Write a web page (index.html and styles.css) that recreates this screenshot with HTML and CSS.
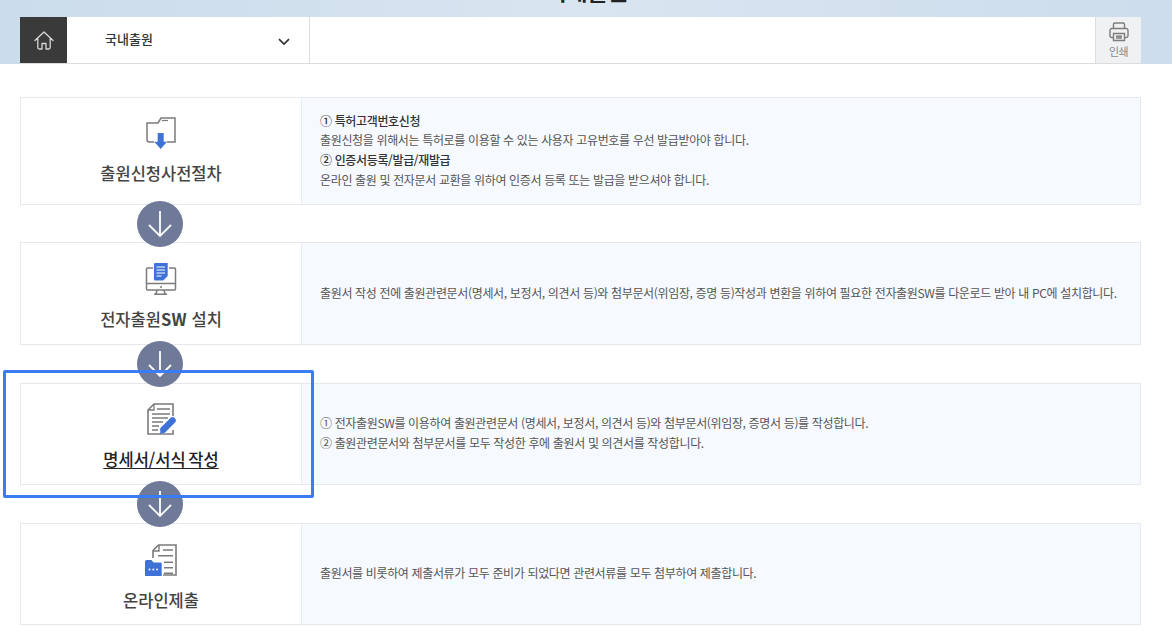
FILE: index.html
```html
<!DOCTYPE html>
<html lang="ko">
<head>
<meta charset="utf-8">
<title>국내출원</title>
<link rel="stylesheet" href="styles.css">
</head>
<body>
<header class="hero">
  <div class="page-title"><span>국내출원</span></div>
  <nav class="bar">
    <a class="home" href="#" aria-label="홈">
      <svg class="home-icon" viewBox="0 0 20 19" width="20" height="19"><path d="M1 9.500 10 1l9 8.500M3.800 7.500V16.500Q3.800 18 5.300 18h2.700v-5.500h4V18h2.700q1.500 0 1.500-1.500V7.500" fill="none" stroke="#d8d8d8" stroke-width="1.300" stroke-linejoin="round" stroke-linecap="round"/></svg>
    </a>
    <div class="select">
      <span class="select-label">국내출원</span>
      <svg viewBox="0 0 12 8" width="12" height="8"><path d="M1 1.200 6 6l5-4.800" fill="none" stroke="#333" stroke-width="1.700"/></svg>
    </div>
    <div class="spacer"></div>
    <button class="print" type="button">
      <svg viewBox="0 0 20 20" width="20" height="20"><path d="M4.500 6.500V2.200C4.500 1.500 5 1 5.700 1h8.600c.7 0 1.200.5 1.200 1.200v4.300M4 15.500H2.700C1.700 15.500 1 14.800 1 13.800V8.300C1 7.300 1.700 6.500 2.700 6.500h14.600C18.300 6.500 19 7.300 19 8.300v5.500c0 1-.7 1.700-1.700 1.700H16M4.500 11.500h11v7h-11zM7 14.200h6M7 16h6" fill="none" stroke="#7d7d7d" stroke-width="1.400"/></svg>
      <span>인쇄</span>
    </button>
  </nav>
</header>

<main class="steps">
  <section class="step step-1">
    <div class="step-head">
      <svg class="step-icon" viewBox="0 0 32 32"><path d="M9 25H4.500Q2 25 2 22.500V6h11l3-5h14v24h-8" fill="none" stroke="#7b7b7b" stroke-width="1.500"/><path d="M17 3.500h6" fill="none" stroke="#7b7b7b" stroke-width="1.200"/><path d="M12.700 16h6v8.800H22L15.700 32 9.300 24.800h3.400z" fill="#3f72d6"/></svg>
      <h2>출원신청사전절차</h2>
    </div>
    <div class="step-body">
      <p class="strong">① 특허고객번호신청</p>
      <p>출원신청을 위해서는 특허로를 이용할 수 있는 사용자 고유번호를 우선 발급받아야 합니다.</p>
      <p class="strong">② 인증서등록/발급/재발급</p>
      <p>온라인 출원 및 전자문서 교환을 위하여 인증서 등록 또는 발급을 받으셔야 합니다.</p>
    </div>
    <span class="next"><svg viewBox="0 0 46 46" width="46" height="46"><path d="M23 10v25M12 24l11 11 11-11" fill="none" stroke="#fff" stroke-width="1.800"/></svg></span>
  </section>

  <section class="step step-2">
    <div class="step-head">
      <svg class="step-icon" viewBox="0 0 32 32"><path d="M8 5H2.500Q1.500 5 1.500 6v20q0 1 1 1h27q1 0 1-1V6q0-1-1-1H24M1.500 20.500h29M12 27l-1 4M19 27l1 4M9 31.250h13" fill="none" stroke="#7b7b7b" stroke-width="1.500"/><circle cx="16" cy="24" r="1" fill="#7b7b7b"/><path d="M9 1q0-1 1-1h12.700v13l-4.500 4.500H10q-1 0-1-1z" fill="#3f72d6"/><path d="M11.500 4h8.500M11.500 7h8.500M11.500 10h8.500M11.500 13h5" stroke="#fff" stroke-width="1.200"/></svg>
      <h2>전자출원<b>SW</b> 설치</h2>
    </div>
    <div class="step-body">
      <p>출원서 작성 전에 출원관련문서(명세서, 보정서, 의견서 등)와 첨부문서(위임장, 증명 등)작성과 변환을 위하여 필요한 전자출원SW를 다운로드 받아 내 PC에 설치합니다.</p>
    </div>
    <span class="next"><svg viewBox="0 0 46 46" width="46" height="46"><path d="M23 10v25M12 24l11 11 11-11" fill="none" stroke="#fff" stroke-width="1.800"/></svg></span>
  </section>

  <section class="step step-3">
    <div class="step-head">
      <svg class="step-icon" viewBox="0 0 32 32"><path d="M28 13V1H9L3 7v24h25v-4" fill="none" stroke="#7b7b7b" stroke-width="1.600"/><path d="M3 7h6V1" fill="none" stroke="#7b7b7b" stroke-width="1.300"/><path d="M12 6h13M7 11h18M7 15h16M7 19h11M7 23h7M7 27h6" stroke="#7b7b7b" stroke-width="1.500"/><path d="M18 27 27.500 17.500" stroke="#fff" stroke-width="9"/><path d="M18.500 26.500 27.500 17.500" stroke="#3f72d6" stroke-width="6.500" stroke-linecap="round"/><path d="M15 31l1-6 5 4z" fill="#3f72d6"/></svg>
      <h2 class="linked">명세서/서식 작성</h2>
    </div>
    <div class="step-body">
      <p>① 전자출원SW를 이용하여 출원관련문서 (명세서, 보정서, 의견서 등)와 첨부문서(위임장, 증명서 등)를 작성합니다.</p>
      <p>② 출원관련문서와 첨부문서를 모두 작성한 후에 출원서 및 의견서를 작성합니다.</p>
    </div>
    <span class="next"><svg viewBox="0 0 46 46" width="46" height="46"><path d="M23 10v25M12 24l11 11 11-11" fill="none" stroke="#fff" stroke-width="1.800"/></svg></span>
    <span class="highlight"></span>
  </section>

  <section class="step step-4">
    <div class="step-head">
      <svg class="step-icon" viewBox="0 0 32 32"><path d="M8 14V6.500L13.500 1H31v30H18" fill="none" stroke="#7b7b7b" stroke-width="1.600"/><path d="M8 7h6V1M18 6h10M13 11.700h15M19 18.300h9M19 23.700h9M19 29.300h9" fill="none" stroke="#7b7b7b" stroke-width="1.400"/><path d="M0 17.500Q0 16 1.500 16h5l2 2.500h7q1.200 0 1.200 1.200V32H0z" fill="#3f72d6"/><g fill="#fff"><circle cx="4.500" cy="25.500" r=".9"/><circle cx="8.300" cy="25.500" r=".9"/><circle cx="12" cy="25.500" r=".9"/></g></svg>
      <h2>온라인제출</h2>
    </div>
    <div class="step-body">
      <p>출원서를 비롯하여 제출서류가 모두 준비가 되었다면 관련서류를 모두 첨부하여 제출합니다.</p>
    </div>
  </section>
</main>
</body>
</html>
```
FILE: styles.css
```css
* { box-sizing: border-box; }
html, body { margin: 0; padding: 0; }
body {
  height: 642px;
  overflow: hidden;
  background: #fff;
  color: #555;
  font-family: "Noto Sans CJK KR", "Noto Sans", sans-serif;
}
.hero {
  height: 64px;
  padding: 0 31px 0 20px;
  background: linear-gradient(90deg, #cbdcec 0%, #d9e5f0 50%, #cddded 100%);
}
.page-title {
  height: 17px;
  padding-bottom: 12px;
  padding-left: 14px;
  display: flex;
  justify-content: center;
  align-items: flex-end;
  overflow: hidden;
  font-size: 22px;
  line-height: 30px;
  font-weight: 700;
  color: #222;
}
.bar {
  display: flex;
  height: 47px;
  background: #fff;
  border-bottom: 1px solid #dcdcdc;
}
.home {
  width: 47px;
  display: flex;
  align-items: center;
  justify-content: center;
  background: #3a3a3a;
}
.select {
  width: 243px;
  padding: 0 19px 0 38px;
  display: flex;
  align-items: center;
  justify-content: space-between;
  border-right: 1px solid #dcdcdc;
  font-size: 13px;
  font-weight: 500;
  color: #333;
}
.select-label { margin-bottom: 4px; }
.select svg { margin-top: 3px; }
.spacer { flex: 1; }
.print {
  width: 46px;
  padding: 5px 0 0;
  display: flex;
  flex-direction: column;
  align-items: center;
  gap: 2px;
  background: #f0f1f2;
  border: 0;
  border-left: 1px solid #dedede;
  font-family: inherit;
  font-size: 11px;
  line-height: 14px;
  color: #888;
  letter-spacing: -.5px;
}
.steps {
  padding: 33px 31px 0 20px;
  display: flex;
  flex-direction: column;
}
.step {
  position: relative;
  display: flex;
  border: 1px solid #e6e8ee;
}
.step-1 { height: 108px; margin-bottom: 37px; }
.step-2 { height: 103px; margin-bottom: 38px; }
.step-3 { height: 102px; margin-bottom: 38px; }
.step-4 { height: 102px; }
.step-head {
  width: 280px;
  flex: none;
  padding-top: 19px;
  display: flex;
  flex-direction: column;
  align-items: center;
  background: #fff;
}
.step-2 .step-head, .step-4 .step-head { padding-top: 20px; }
.step-icon { width: 32px; height: 32px; display: block; }
.step-head h2 {
  margin: 11px 0 0;
  font-size: 16.500px;
  line-height: 26px;
  font-weight: 500;
  color: #444;
}
.step-head h2 b { font-weight: 700; letter-spacing: .3px; }
.step-head h2.linked {
  color: #222;
  word-spacing: -2px;
  text-decoration: underline;
  text-underline-offset: 2px;
}
.step-body {
  flex: 1;
  padding: 0 18px 2px;
  display: flex;
  flex-direction: column;
  justify-content: center;
  border-left: 1px solid #e9edf3;
  background: #f6f9fd;
  font-size: 12px;
  letter-spacing: -.35px;
  line-height: 19.700px;
}
.step-body p { margin: 0; white-space: nowrap; }
.step-body .strong { color: #333; font-weight: 500; }
.next {
  position: absolute;
  left: 116px;
  bottom: -43px;
  z-index: 1;
  width: 46px;
  height: 46px;
  border-radius: 50%;
  background: #6f7a99;
}
.next svg { display: block; }
.highlight {
  position: absolute;
  z-index: 2;
  left: -18px;
  top: -14px;
  width: 311px;
  height: 128px;
  border: 3px solid #3a7cf5;
  border-radius: 2px;
  pointer-events: none;
}
```
